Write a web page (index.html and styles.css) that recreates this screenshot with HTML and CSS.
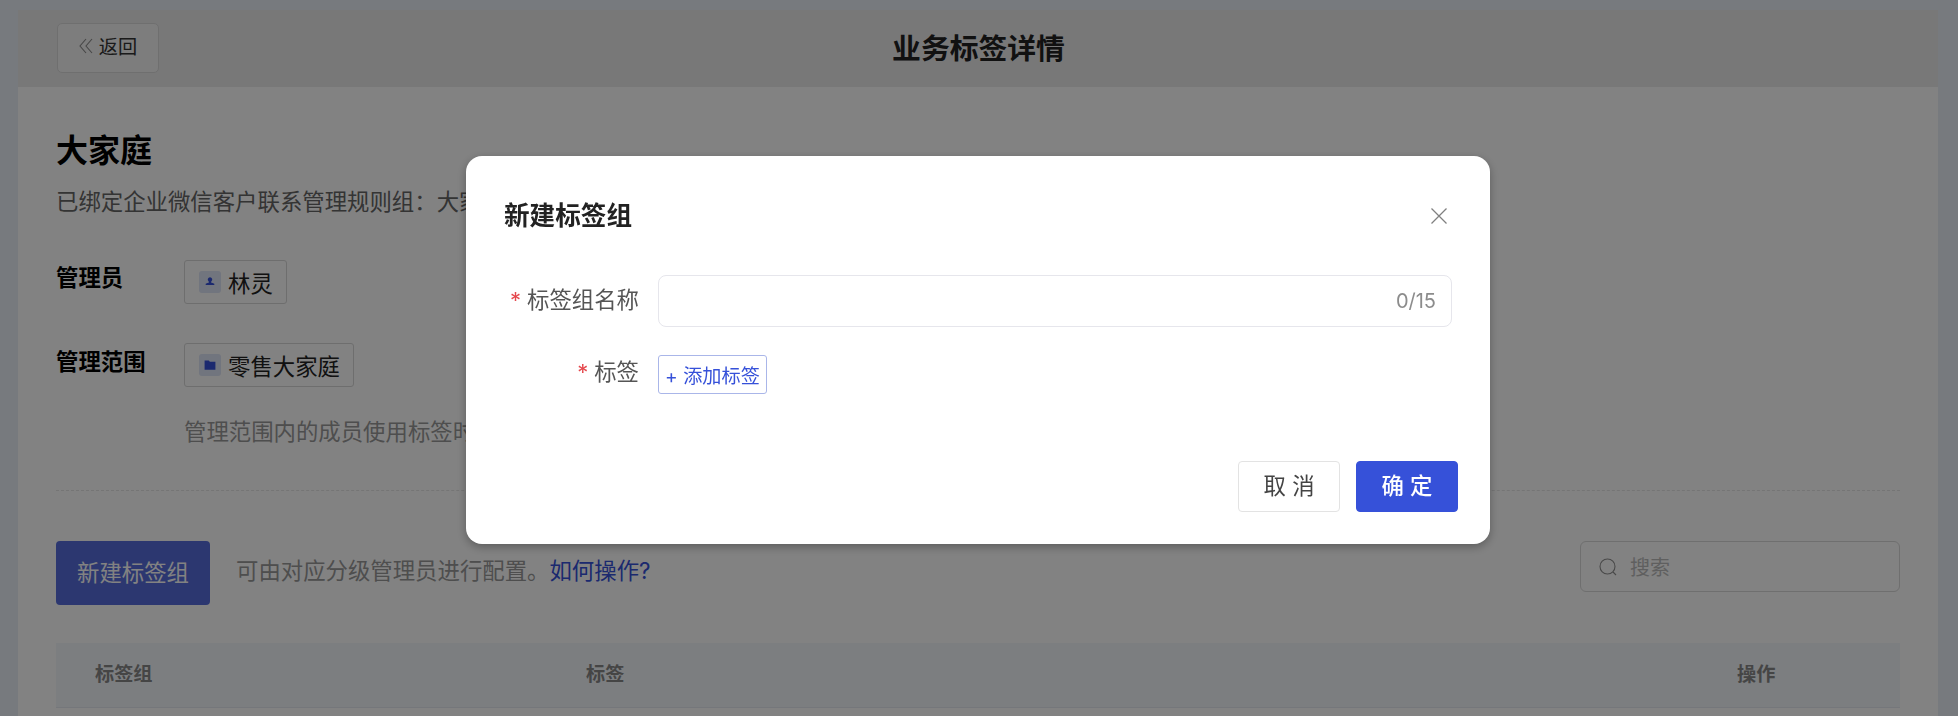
FILE: index.html
```html
<!DOCTYPE html>
<html lang="zh-CN">
<head>
<meta charset="utf-8">
<title>业务标签详情</title>
<link rel="stylesheet" href="styles.css">
</head>
<body>
<div class="page">
  <div class="panel">
    <header class="topbar">
      <div class="topbar-left">
        <button class="back">
          <svg class="back-icon" viewBox="0 0 14 16" width="14" height="16"><path d="M7 1 1 8l6 7M13 1 7 8l6 7" fill="none" stroke="#8a8a8a" stroke-width="1.1"/></svg>
          <span>返回</span>
        </button>
      </div>
      <h1 class="page-title">业务标签详情</h1>
      <div></div>
    </header>
    <main class="content">
      <h2 class="group-title">大家庭</h2>
      <p class="subtitle">已绑定企业微信客户联系管理规则组：大家庭</p>
      <div class="info-row first">
        <div class="info-label">管理员</div>
        <div class="tag">
          <span class="tag-icon"><svg viewBox="0 0 12 12" width="12" height="12"><path d="M6 1.2a2.3 2.3 0 0 1 1.5 4c-.4.4-.5.8-.4 1.2.1.5 2.9.7 3.2 1.4v1.2H1.7V7.8c.3-.7 3.1-.9 3.2-1.4.1-.4 0-.8-.4-1.2A2.3 2.3 0 0 1 6 1.2Z" fill="#3651d9"/></svg></span>
          <span>林灵</span>
        </div>
      </div>
      <div class="info-row">
        <div class="info-label">管理范围</div>
        <div class="tag">
          <span class="tag-icon"><svg viewBox="0 0 12 12" width="12" height="12"><path d="M.6 1.4h4.1l1.2 1.3h5.5v8H.6Z" fill="#3651d9"/></svg></span>
          <span>零售大家庭</span>
        </div>
      </div>
      <p class="hint">管理范围内的成员使用标签时，可以查看和使用此标签组</p>
      <div class="divider"></div>
      <div class="toolbar">
        <button class="primary">新建标签组</button>
        <span class="toolbar-text">可由对应分级管理员进行配置。<a class="link">如何操作?</a></span>
        <div class="search">
          <svg viewBox="0 0 18 18" width="18" height="18"><circle cx="8.5" cy="8.5" r="7.5" fill="none" stroke="#8f8f8f" stroke-width="1.1"/><path d="m14 14 3 3" stroke="#8f8f8f" stroke-width="1.1"/></svg>
          <span>搜索</span>
        </div>
      </div>
      <div class="table-head">
        <div class="col-group">标签组</div>
        <div class="col-tags">标签</div>
        <div class="col-action">操作</div>
      </div>
    </main>
  </div>
</div>
<div class="overlay">
  <section class="modal">
    <div class="modal-head">
      <h3 class="modal-title">新建标签组</h3>
      <svg class="close" viewBox="0 0 16 16" width="16" height="16"><path d="m.5.5 15 15m0-15-15 15" fill="none" stroke="#808080" stroke-width="1.3"/></svg>
    </div>
    <div class="field">
      <label class="field-label"><span class="req">*</span>标签组名称</label>
      <div class="input">
        <span class="count">0/15</span>
      </div>
    </div>
    <div class="field tags">
      <label class="field-label"><span class="req">*</span>标签</label>
      <button class="add">+ 添加标签</button>
    </div>
    <div class="modal-foot">
      <button class="btn">取 消</button>
      <button class="btn ok">确 定</button>
    </div>
  </section>
</div>
</body>
</html>
```
FILE: styles.css
```css
* { box-sizing: border-box; }
html, body { margin: 0; height: 100%; overflow: hidden; }
body {
  background: #e9f0f8;
  font-family: Inter, "Noto Sans CJK SC", sans-serif;
  color: #222;
}
button { font-family: inherit; }
h1, h2, h3, p { margin: 0; }
.page { padding: 10px 20px 0 18px; height: 100%; }
.panel { background: #fff; height: 100%; }
.topbar {
  height: 77px;
  background: #ebebec;
  display: grid;
  grid-template-columns: 1fr auto 1fr;
  align-items: center;
  padding: 0 38px 0 39px;
}
.back {
  width: 102px;
  height: 50px;
  margin-bottom: 1px;
  border: 1px solid #dadada;
  border-radius: 5px;
  background: #f5f5f5;
  display: flex;
  align-items: center;
  justify-content: center;
  gap: 6px;
  font-size: 19.2px;
  color: #333;
  padding: 0 0 4px;
}
.page-title { font-size: 28.8px; font-weight: 700; line-height: 40px; color: #222; }
.content { padding: 42px 38px 0; }
.group-title { font-size: 32px; line-height: 44px; font-weight: 700; color: #000; }
.subtitle { margin-top: 13px; font-size: 22.4px; line-height: 32px; color: #666; white-space: nowrap; }
.info-row { display: flex; align-items: flex-start; margin-top: 39px; }
.info-row.first { margin-top: 42px; }
.info-label { width: 128px; padding-top: 1px; font-size: 22.4px; line-height: 36px; font-weight: 700; color: #000; }
.first .info-label { padding-top: 0; }
.tag {
  height: 44px;
  border: 1px solid #d8d8d8;
  border-radius: 3px;
  display: flex;
  align-items: center;
  padding: 0 13px 0 14px;
  gap: 7px;
  font-size: 22.4px;
  color: #222;
}
.tag-icon {
  width: 22px;
  height: 22px;
  border-radius: 3px;
  background: #dde5f8;
  display: flex;
  align-items: center;
  justify-content: center;
}
.hint { margin: 29px 0 0 128px; font-size: 22.4px; line-height: 32px; color: #999; white-space: nowrap; }
.divider { margin-top: 42px; border-top: 1px dashed #e6e6e6; }
.toolbar { margin-top: 50px; display: flex; align-items: flex-start; height: 64px; }
.primary {
  width: 154px;
  height: 64px;
  border: 0;
  border-radius: 4px;
  background: #566ddc;
  color: #fff;
  font-size: 22.4px;
  padding: 0 0 4px;
}
.toolbar-text { margin-left: 26px; font-size: 22.4px; line-height: 60px; color: #999; white-space: nowrap; }
.link { color: #3651d9; }
.search {
  margin-left: auto;
  width: 320px;
  height: 51px;
  border: 1px solid #d9d9d9;
  border-radius: 6px;
  display: flex;
  align-items: center;
  padding: 0 18px;
  gap: 13px;
  font-size: 20px;
  color: #bbb;
}
.table-head {
  margin-top: 38px;
  height: 65px;
  background: #f3f7fb;
  border-bottom: 1px solid #e6eaf2;
  display: flex;
  align-items: center;
  padding-bottom: 4px;
  font-size: 19.2px;
  font-weight: 700;
  color: #888;
}
.col-group { width: 530px; padding-left: 39px; }
.col-tags { flex: 1; }
.col-action { width: 163px; }
.overlay {
  position: fixed;
  inset: 0;
  background: rgba(0, 0, 0, .49);
  display: flex;
  justify-content: center;
  align-items: flex-start;
  padding: 156px 2px 0 0;
}
.modal {
  width: 1024px;
  height: 388px;
  border-radius: 16px;
  background: #fff;
  box-shadow: 0 3px 10px rgba(0, 0, 0, .3);
  padding: 0 32px 0 38px;
}
.modal-head { height: 119px; display: flex; align-items: center; justify-content: space-between; padding: 0 11px 0 0; }
.modal-title { font-size: 25.6px; font-weight: 700; color: #222; margin: 0 0 4px; }
.close { display: block; }
.field { display: flex; align-items: center; height: 52px; padding-right: 6px; }
.field.tags { margin-top: 28px; height: 39px; align-items: flex-start; }
.field-label {
  width: 135px;
  margin-right: 19px;
  padding-bottom: 2px;
  text-align: right;
  font-size: 22.4px;
  line-height: 34px;
  color: #555;
  white-space: nowrap;
}
.field.tags .field-label { padding-bottom: 0; }
.req { color: #e5484d; margin-right: 6px; font-size: 22px; }
.input {
  flex: 1;
  height: 52px;
  border: 1px solid #e6e6ec;
  border-radius: 8px;
  display: flex;
  align-items: center;
  justify-content: flex-end;
  padding: 0 15px;
}
.count { font-size: 20px; color: #8c8c8c; }
.add {
  width: 109px;
  height: 39px;
  padding: 0;
  border: 1px solid #aab6e9;
  border-radius: 3px;
  background: #fff;
  color: #3651d9;
  font-size: 19.2px;
  white-space: nowrap;
}
.modal-foot { margin-top: 67px; display: flex; justify-content: flex-end; gap: 16px; }
.btn {
  width: 102px;
  height: 51px;
  border: 1px solid #e3e3e3;
  border-radius: 4px;
  background: #fff;
  color: #444;
  font-size: 22.4px;
  padding: 0 0 5px;
}
.btn.ok { background: #3651d9; border-color: #3651d9; color: #fff; font-weight: 500; }
```
